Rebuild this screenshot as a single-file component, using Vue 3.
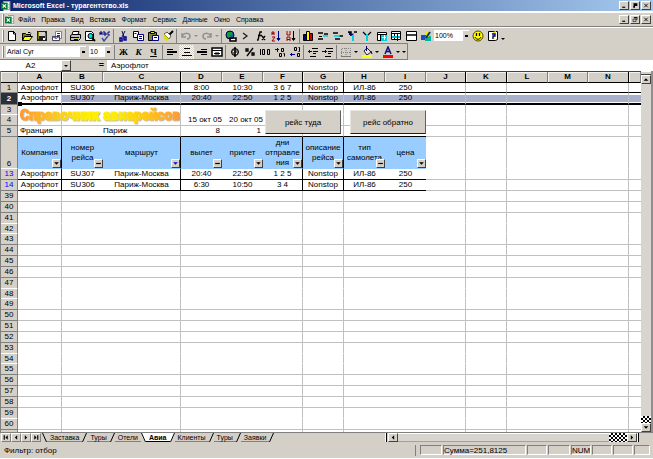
<script setup>
const icons = {
  excel: '<path fill="#fff" d="M3 0h8v12H3z"/><path fill="none" stroke="#808080" d="M3.5.5h7v10h-7"/><path fill="#007a33" d="M0 2h8v8H0z"/><path stroke="#fff" stroke-width="1.5" d="M2 4l4 4M6 4l-4 4"/><path stroke="#84b090" d="M8 4.5h2M8 7.500h2"/>',
  blank: '<path fill="#fff" stroke="#000" d="M2.500 1.500h5l2 2v7h-7z"/><path fill="none" stroke="#000" d="M7.500 1v3h2"/>',
  open: '<path fill="#808000" stroke="#000" d="M1.500 10.500v-7h3l1 1h4v2"/><path fill="#ffff00" stroke="#000" d="M1.500 10.500l2-4h8l-3 4z"/><path fill="none" stroke="#000" d="M7 2.500h2l1 1"/>',
  save: '<path fill="#202020" d="M1 1h10v10H1z"/><path fill="#808000" d="M2 2h1v7H2zM9 3h1v6H9z"/><path fill="#d4d0c8" d="M3 2h6v4H3z"/><path fill="#fff" d="M7 8h2v2H7z"/>',
  mail: '<path fill="#fff" stroke="#808080" d="M4.500 1.500h6v7h-6z"/><path stroke="#335" d="M6 3.500h3M6 5.500h3"/><path fill="#fff" stroke="#446" d="M1.500 6.500h7v4h-7zl3.500 2 3.500-2"/>',
  print: '<path fill="#fff" stroke="#000" d="M4 1.500h6l-1 3H3z"/><path fill="#c0c0c0" stroke="#000" d="M1.500 5.500l2-1h8v4l-2 2h-8z"/><path stroke="#000" d="M2 7.500h8M5 9.500h4"/><path fill="#dd0" d="M7 8h2v1H7z"/>',
  preview: '<path fill="#fff" stroke="#000" d="M1.500 1.500h6l2 2v7h-8z"/><circle cx="6.500" cy="6" r="2.500" fill="#00e0f0" stroke="#000"/><path stroke="#000" stroke-width="2" d="M8 8l3 3"/>',
  spell: '<path fill="none" stroke="#000080" d="M1 5V2h2v3M1 3.500h2M5 1v4h2V3H5M11 2H9v3h2"/><path fill="none" stroke="#4050a0" stroke-width="1.500" d="M3 8l2 3 4-5"/>',
  cut: '<path stroke="#101050" d="M5 1l2 6M8 1L5 7"/><path fill="none" stroke="#000090" stroke-width="1.500" d="M3 8h2v3H3zM7 7h2v3H7z"/>',
  copy: '<path fill="#fff" stroke="#000" d="M1.500 1.500h5v6h-5z"/><path fill="#fff" stroke="#000080" d="M5.500 4.500h6v6h-6z"/><path stroke="#000080" d="M7 6.500h3M7 8.500h3M2.500 3.500h2"/>',
  paste: '<path fill="#808040" stroke="#000" d="M1.500 2.500h8v8h-8z"/><path fill="#ee0" stroke="#000" d="M3.500 1.500h4v2h-4z"/><path fill="#fff" stroke="#000080" d="M5.500 5.500h6v5h-6z"/><path stroke="#000080" d="M7 7.500h3"/>',
  brush: '<path stroke="#000" stroke-width="2" d="M11 1L7 5"/><path fill="#fff" stroke="#555" d="M2 4l3-2 4 4-2 3z"/><path fill="#dd0" d="M2 4l5 5-3 2-2-3z"/>',
  undo: '<path fill="none" stroke="#909090" stroke-width="1.500" d="M2 3v4h4M2 6c3-4 8-3 8 0s-2 3-3 3"/>',
  redo: '<path fill="none" stroke="#909090" stroke-width="1.500" d="M10 3v4H6M10 6C7 2 2 3 2 6s2 3 3 3"/>',
  globe: '<circle cx="5" cy="5" r="4" fill="#1464a0" stroke="#003"/><path fill="#11a030" d="M3 2h4v3H5v2H2V4z"/><path fill="none" stroke="#000" stroke-width="1.500" d="M5 8h6v3H5z"/><path stroke="#fff" d="M6 9.500h4"/>',
  sigma: '<path fill="none" stroke="#222" stroke-width="1.300" d="M3 3l4 3-4 3"/>',
  fx: '<path fill="none" stroke="#000" stroke-width="1.300" d="M7 2H5L3 10H2M3 5.500h4M7 6l3 4M10 6l-3 4"/>',
  sortA: '<path fill="none" stroke="#a00000" d="M2 5V2h2v3M2 3.500h2"/><path fill="none" stroke="#a00000" d="M2 7h3l-3 4h3"/><path stroke="#000090" fill="#000" d="M8.500 1v8M7 8.500h3l-1.500 2z"/>',
  sortZ: '<path fill="none" stroke="#a00000" d="M2 1v4h3V1"/><path fill="none" stroke="#a00000" d="M2 11V7h3v4M2 9.500h3"/><path stroke="#000" fill="#000" d="M8.500 1v8M7 8.500h3l-1.500 2z"/>',
  chart: '<path fill="#000080" stroke="#000" d="M1.500 4.500h3v6h-3z"/><path fill="#ff0" stroke="#000" d="M4.500 1.500h3v9h-3z"/><path fill="#d00000" stroke="#000" d="M7.500 3.500h3v7h-3z"/>',
  rowIn: '<path stroke="#000" stroke-width="1.500" d="M1 3h5M1 9h5M7 4h4"/><path stroke="#00d0e0" stroke-width="1.500" d="M6 6h5"/><path stroke="#000" d="M2 6.500h3"/>',
  rowOut: '<path stroke="#000" stroke-width="1.500" d="M1 3h5M3 9h5M7 6h4"/><path stroke="#00d0e0" stroke-width="1.500" d="M2 6h6"/>',
  colIn: '<path stroke="#000" stroke-width="1.500" d="M2 2h3v4M8 2h3"/><path stroke="#00d0e0" stroke-width="2" d="M7 3v8"/><path stroke="#000090" d="M3 4.500h4"/>',
  colOut: '<path fill="none" stroke="#000" stroke-width="1.300" d="M2 2l3 3M10 2L7 5"/><path stroke="#00d0e0" stroke-width="2" d="M6 4v7"/>',
  gridA: '<path fill="#fff" stroke="#000" d="M1.500 2.500h9v8h-9z"/><path fill="#00d0e0" d="M5 5h6v6H5z"/><path stroke="#000" d="M1 4.500h10M4.500 4v6"/><path stroke="#fff" d="M6 7.500h4M8.500 5v5"/>',
  gridB: '<path fill="#fff" stroke="#000" d="M1.500 1.500h9v8h-9z"/><path stroke="#000" d="M1 3.500h10M4.500 3v7"/><path stroke="#00c0d0" stroke-width="2" d="M2 7h8"/><path stroke="#000080" d="M7.500 4v7"/>',
  pane: '<path fill="#fff" stroke="#000" d="M1.500 1.500h10v9h-10z"/><path stroke="#000" stroke-width="1.500" d="M1 5h10"/>',
  draw: '<path fill="#1450b0" d="M1 5h5v5H1z"/><path fill="#00b0a0" d="M5 6h6v5H5z"/><path fill="#ee0" d="M6 1h3v6H6z"/><path stroke="#003080" stroke-width="2" d="M10 2L6 8"/>',
  smile: '<circle cx="6" cy="6" r="5" fill="#ff0" stroke="#554400"/><path stroke="#000" stroke-width="1.300" d="M4.500 3v3M7.500 3v3"/><path fill="none" stroke="#000" d="M3 7c1 3 5 3 6 0"/>',
  help: '<path fill="#fff" stroke="#000" d="M1.500 1.500h9v8l-2 1h-7z"/><path fill="#ee0" d="M6 2l3-1v3L7 9H5z"/><path fill="none" stroke="#000090" stroke-width="1.300" d="M5 4h3v2H6v3"/>',
  left: '<path stroke="#000" stroke-width="2" d="M1 6h10"/><path stroke="#000" d="M1 3.500h6M1 8.500h6"/>',
  center: '<path stroke="#000" d="M3 2.500h6M3 6.500h6M1 9.500h10"/>',
  right: '<path stroke="#000" stroke-width="2" d="M1 6h10"/><path stroke="#000" d="M5 3.500h6M5 8.500h6"/>',
  merge: '<path fill="#fff" stroke="#000" stroke-width="1.500" d="M1 2h10v8H1z"/><path stroke="#000" d="M1 4.500h10"/><path fill="none" stroke="#000" d="M3 7.500h6M5 6v3M7 6v3"/>',
  money: '<circle cx="6" cy="6" r="3.500" fill="#777" stroke="#000"/><path stroke="#000" stroke-width="1.500" d="M6 1v10"/><path stroke="#fff" d="M4 5.500h1M7 7.500h1"/>',
  percent: '<path fill="none" stroke="#000" stroke-width="1.300" d="M2 3h2v2H2zM8 7h2v2H8zM9 2L3 10"/>',
  zeros: '<path fill="none" stroke="#000" d="M1.500 3v6M3.500 3.500h2v5h-2zM8.500 3.500h2v5h-2z"/>',
  decUp: '<path fill="none" stroke="#000090" d="M1 3.500h4M3.500 2v4"/><path fill="none" stroke="#000" d="M7.500 2.500h2v3h-2zM5.500 7.500h2v3h-2zM9.500 7.500h1v3"/>',
  decDown: '<path fill="none" stroke="#000" d="M5.500 1.500h2v3h-2zM9.500 1.500h1v4h-1M8.500 7.500h2v3h-2z"/><path stroke="#000090" d="M1 8.500h5M2.500 7v3"/>',
  indentL: '<path stroke="#000" d="M5 2.500h6M6 5.500h5M6 7.500h3M3 10.500h6"/><path stroke="#000090" d="M1 5.500h4M2.500 4v3"/>',
  indentR: '<path stroke="#000" d="M4 2.500h7M6 5.500h5M6 7.500h3M3 10.500h6"/><path stroke="#000090" d="M0 5.500h5M3.500 4v3"/>',
  borders: '<path fill="none" stroke="#808080" stroke-dasharray="1 1" d="M1.500 10V2.500h9V10M6 2v8M1 6.500h10"/><path stroke="#777" d="M1 10.500h10"/>',
  fill: '<path fill="#e8e8e8" stroke="#222" d="M3 5l3-3 4 4-4 3z"/><path stroke="#000060" d="M5.500 0v5M10 5l1 3"/><path fill="#ff0" d="M1 9h10v3H1z"/>',
  color: '<path fill="none" stroke="#101080" stroke-width="1.500" d="M3 8l3-7 3 7M4 5.500h4"/><path fill="#f00" d="M1 9h10v3H1z"/>',
  min: '<path fill="#000" d="M3 8h5v2H3z"/>',
  restore: '<path fill="none" stroke="#000" d="M4.500 2.500h5v4h-2M2.500 5.500h5v4h-5z"/><path stroke="#000" stroke-width="2" d="M4 3h6"/>',
  max: '<path fill="#000" d="M3 2h7v5H6v3H3V6h1z"/>',
  close: '<path stroke="#000" stroke-width="1.500" d="M3 3l6 6M9 3L3 9"/>',
  first: '<path fill="#000" d="M2 2h2v8H2zM9 2v8L5 6z"/>',
  prev: '<path fill="#000" d="M8 2v8L4 6z"/>',
  next: '<path fill="#000" d="M4 2v8l4-4z"/>',
  last: '<path fill="#000" d="M8 2h2v8H8zM3 2v8l4-4z"/>',
  up: '<path fill="#000" d="M2 8h8L6 4z"/>',
  down: '<path fill="#000" d="M2 4h8L6 8z"/>',
  dash: '<path fill="#000" d="M2 5h8v2H2z"/>',
  blueDown: '<path fill="#00f" d="M2 4h8L6 8z"/>'
}
const menus = ['Файл', 'Правка', 'Вид', 'Вставка', 'Формат', 'Сервис', 'Данные', 'Окно', 'Справка']
const groups = [
  ['blank', 'open', 'save', 'mail'],
  ['print', 'preview', 'spell'],
  ['cut', 'copy', 'paste', 'brush'],
  ['undo', 'more', 'redo', 'more'],
  ['globe', 'sigma', 'fx', 'sortA', 'sortZ']
]
const tableTools = ['chart', 'rowIn', 'rowOut', 'colIn', 'colOut', 'gridA', 'gridB', 'pane', 'draw']
const formatGroups = [
  ['left', 'center', 'right', 'merge'],
  ['money', 'percent', 'zeros', 'decUp', 'decDown'],
  ['indentL', 'indentR'],
  ['borders', 'more', 'fill', 'more', 'color', 'more', 'more']
]
const cols = 'ABCDEFGHIJKLMNO'.split('')
const strong = 'ACFGJKN'
const flight = (n, kind, cells) => ({ n, kind, cells })
const rows = [
  flight(1, 'first', ['Аэрофлот', 'SU306', 'Москва-Париж', '8:00', '10:30', '3 6 7', 'Nonstop', 'ИЛ-86', '250']),
  flight(2, 'selected', ['Аэрофлот', 'SU307', 'Париж-Москва', '20:40', '22:50', '1 2 5', 'Nonstop', 'ИЛ-86', '250']),
  flight(3, 'short noline', []),
  flight(4, 'dates', ['', '', '', '15 окт 05', '20 окт 05']),
  flight(5, 'place', ['Франция', '', 'Париж', '8', '1']),
  flight(6, 'heads', ['Компания', 'номер рейса', 'маршрут', 'вылет', 'прилет', 'дни отправле ния', 'описание рейса', 'тип самолета', 'цена']),
  flight(13, 'found', ['Аэрофлот', 'SU307', 'Париж-Москва', '20:40', '22:50', '1 2 5', 'Nonstop', 'ИЛ-86', '250']),
  flight(14, 'found', ['Аэрофлот', 'SU306', 'Париж-Москва', '6:30', '10:50', '3 4', 'Nonstop', 'ИЛ-86', '250'])
]
for (let n = 39; n <= 60; n++) {
  const faint = [41, 42, 47, 48, 53, 54, 59].includes(n)
  const low = [42, 48, 54].includes(n)
  rows.push(flight(n, (faint ? 'noline ' : '') + (low ? 'short' : ''), []))
}
rows.push(flight('', '', []))
const filterIcon = i => (i === 2 ? 'blueDown' : [1, 3, 7].includes(i) ? 'dash' : 'down')
const tabs = ['Заставка', 'Туры', 'Отели', 'Авиа', 'Клиенты', 'Туры', 'Заявки']
const panels = ['p20', 'p22', 'p20 num', 'p20', 'p20', 'p15']
</script>

<template>
  <main class="window">
    <header class="title">
      <svg class="ico" viewBox="0 0 12 12" v-html="icons.excel"></svg>
      <h1>Microsoft Excel - турагентство.xls</h1>
      <div class="controls">
        <button v-for="c in ['min', 'max', 'close']" :key="c" class="ctl" :aria-label="c"><svg viewBox="0 0 12 12" v-html="icons[c]"></svg></button>
      </div>
    </header>
    <nav class="menu">
      <i class="grip"></i>
      <svg class="ico" viewBox="0 0 12 12" v-html="icons.excel"></svg>
      <a v-for="m in menus" :key="m" href="#">{{ m }}</a>
      <div class="controls">
        <button v-for="c in ['min', 'restore', 'close']" :key="c" class="ctl" :aria-label="c"><svg viewBox="0 0 12 12" v-html="icons[c]"></svg></button>
      </div>
    </nav>

    <div class="bar">
      <i class="grip"></i>
      <template v-for="(g, gi) in groups" :key="gi">
        <div class="group">
          <button v-for="(b, bi) in g" :key="bi" :class="['tool', { more: b === 'more' }]" :aria-label="b">
            <i v-if="b === 'more'" class="caret" :class="{ off: gi === 3 }"></i>
            <svg v-else viewBox="0 0 12 12" v-html="icons[b]"></svg>
          </button>
        </div>
        <i class="sep"></i>
      </template>
      <div class="group fit">
        <button v-for="b in tableTools" :key="b" class="tool" :aria-label="b"><svg viewBox="0 0 12 12" v-html="icons[b]"></svg></button>
      </div>
      <div class="combo zoom">
        <select aria-label="Масштаб"><option>100%</option></select><i class="caret"></i>
      </div>
      <button class="tool" aria-label="smile"><svg viewBox="0 0 12 12" v-html="icons.smile"></svg></button>
      <button class="tool" aria-label="help"><svg viewBox="0 0 12 12" v-html="icons.help"></svg></button>
      <button class="tool more low" aria-label="more"><i class="caret"></i></button>
    </div>

    <div class="bar format">
      <i class="grip"></i>
      <div class="combo font"><select aria-label="Шрифт"><option>Arial Cyr</option></select><i class="caret"></i></div>
      <div class="combo size"><select aria-label="Размер"><option>10</option></select><i class="caret"></i></div>
      <i class="sep"></i>
      <div class="group">
        <button class="tool letter">Ж</button>
        <button class="tool letter italic">К</button>
        <button class="tool letter under">Ч</button>
      </div>
      <template v-for="(g, gi) in formatGroups" :key="gi">
        <i class="sep"></i>
        <div class="group">
          <button v-for="(b, bi) in g" :key="bi" :class="['tool', { more: b === 'more', pressed: b === 'center' }]" :aria-label="b">
            <i v-if="b === 'more'" class="caret"></i>
            <svg v-else viewBox="0 0 12 12" v-html="icons[b]"></svg>
          </button>
        </div>
      </template>
    </div>

    <div class="formula">
      <input class="name" aria-label="Имя" value="A2">
      <button class="drop" aria-label="Имена"><i class="caret"></i></button>
      <span class="equals">=</span>
      <input class="value" aria-label="Формула" value="Аэрофлот">
    </div>

    <section class="book">
      <div class="sheet">
        <table>
          <colgroup>
            <col class="w17">
            <col class="w44"><col class="w41"><col class="w78"><col class="w41"><col class="w41"><col class="w40">
            <col class="w41"><col class="w41"><col class="w41"><col class="w40"><col class="w41"><col class="w41">
            <col class="w40"><col class="w41"><col>
          </colgroup>
          <thead>
            <tr>
              <th></th>
              <th v-for="c in cols" :key="c" :class="{ strong: strong.includes(c) }">{{ c === 'O' ? '' : c }}</th>
            </tr>
          </thead>
          <tbody>
            <tr v-for="r in rows" :key="r.n" :class="r.kind">
              <th>{{ r.n }}</th>
              <td v-for="(c, i) in cols" :key="c" :class="{ strong: strong.includes(c), used: i < 9, active: r.n === 2 && i === 0 }">
                <span class="txt">{{ r.cells[i] }}</span>
                <button v-if="r.n === 6 && i < 9" class="filter" :aria-label="'Фильтр ' + c"><svg viewBox="0 0 12 12" v-html="icons[filterIcon(i)]"></svg></button>
              </td>
            </tr>
          </tbody>
        </table>
        <i class="handle"></i>
        <div class="wordart">Справочник авиарейсов</div>
        <button class="macro there">рейс туда</button>
        <button class="macro back">рейс обратно</button>
      </div>
      <div class="vscroll">
        <i class="split"></i>
        <button class="sb" aria-label="Вверх"><svg viewBox="0 0 12 12" v-html="icons.up"></svg></button>
        <i class="grow"></i>
        <i class="check"></i>
        <button class="sb" aria-label="Вниз"><svg viewBox="0 0 12 12" v-html="icons.down"></svg></button>
      </div>
    </section>

    <div class="tabs">
      <div class="navs">
        <button v-for="n in ['first', 'prev', 'next', 'last']" :key="n" class="nav" :aria-label="n"><svg viewBox="0 0 12 12" v-html="icons[n]"></svg></button>
      </div>
      <svg class="slash" viewBox="0 0 5 9"><path d="M0.500 0L4.500 9" /></svg>
      <template v-for="(t, i) in tabs" :key="i">
        <button :class="['tab', { on: i === 3 }]">{{ t }}</button>
        <svg class="slash" viewBox="0 0 5 9">
          <polygon v-if="i === 2" points="0,0 5,0 5,9 4,9" />
          <polygon v-if="i === 3" points="0,0 5,0 1,9 0,9" />
          <path :d="i === 2 ? 'M0.500 0L4.500 9' : 'M4.500 0L0.500 9'" />
        </svg>
      </template>
      <div class="hscroll">
        <i class="bar-split"></i>
        <button class="sb" aria-label="Влево"><svg viewBox="0 0 12 12" v-html="icons.prev"></svg></button>
        <i class="grow"></i>
        <i class="check"></i>
        <button class="sb" aria-label="Вправо"><svg viewBox="0 0 12 12" v-html="icons.next"></svg></button>
        <i class="bar-split"></i>
      </div>
    </div>

    <footer class="status">
      <span class="mode">Фильтр: отбор</span>
      <i class="sep"></i>
      <span class="panel p22"></span>
      <span class="panel sum">Сумма=251,8125</span>
      <span v-for="(p, i) in panels" :key="i" :class="['panel', p]">{{ i === 2 ? 'NUM' : '' }}</span>
    </footer>
  </main>
</template>

<style>
body { background: #d4d0c8; overflow: hidden; }
</style>

<style scoped>
.window { height: 100vh; display: flex; flex-direction: column; background: #d4d0c8; color: #000; font: 7px/9px "Liberation Sans", Arial, sans-serif; }
* { box-sizing: border-box; }
button, input, select { font: inherit; color: inherit; margin: 0; padding: 0; border: 0; border-radius: 0; background: none; appearance: none; outline: none; }
i { display: block; flex: none; }
svg { display: block; flex: none; }
.title { flex: none; height: 11px; display: flex; align-items: center; gap: 2px; padding: 0 2px 0 1px; background: linear-gradient(90deg, #0a246a, #a6caf0); color: #fff; }
.title h1 { margin: 0; font-size: 7px; line-height: 9px; }
.ico { width: 10px; height: 10px; }
.controls { margin-left: auto; display: flex; gap: 1px; }
.ctl { width: 10px; height: 9px; background: #d4d0c8; border: 1px solid; border-color: #fff #404040 #404040 #fff; }
.ctl svg { width: 8px; height: 7px; }
.menu { flex: none; height: 16px; display: flex; align-items: center; gap: 6px; padding: 0 2px 0 2px; border-top: 2px solid #fff; border-bottom: 1px solid #808080; }
.menu .ico { margin: 0 -3px 0 -5px; }
.menu a { color: #000; text-decoration: none; }
.grip { width: 2px; height: 12px; border-left: 1px solid #fff; border-right: 1px solid #808080; }
.bar { flex: none; height: 16px; display: flex; align-items: center; padding-left: 2px; border-top: 1px solid #fff; }
.format { align-self: flex-start; height: 17px; border-top-color: #808080; border-right: 1px solid #808080; border-bottom: 1px solid #808080; }
.group { display: flex; align-items: center; }
.fit { width: 132px; }
.fit .tool { flex: 1; }
.tool { width: 15px; height: 14px; display: flex; align-items: center; justify-content: center; }
.tool svg { width: 12px; height: 12px; }
.more { width: 6px; }
.low { padding-top: 6px; }
.pressed { background: repeating-conic-gradient(#fff 0 25%, #d4d0c8 0 50%) 0 0 / 2px 2px; }
.sep { width: 1px; height: 14px; margin: 0 1px; background: #808080; }
.caret { width: 0; height: 0; border: 2px solid transparent; border-top-color: #000; border-bottom: 0; }
.caret.off { border-top-color: #909090; }
.letter { font: 700 9px/12px "Liberation Serif", serif; }
.italic { font-style: italic; }
.under { text-decoration: underline; }
.combo { display: flex; align-items: center; height: 11px; background: #fff; }
.combo select { flex: 1; min-width: 0; height: 11px; padding-left: 1px; }
.combo .caret { width: 6px; height: 10px; border: 0; background: linear-gradient(#000, #000) center / 3px 2px no-repeat #d4d0c8; }
.font { width: 80px; margin: 0 3px 0 2px; }
.size { width: 22px; margin-right: 2px; }
.zoom { width: 35px; margin: 0 1px 0 1px; }
.formula { flex: none; height: 11px; display: flex; background: #d4d0c8; }
.formula input { height: 11px; background: #fff; font-size: 8px; line-height: 11px; }
.name { width: 61px; text-align: center; }
.drop { width: 10px; display: flex; align-items: center; justify-content: center; border: 1px solid; border-color: #fff #404040 #404040 #fff; }
.equals { width: 36px; padding-right: 3px; text-align: right; font: 700 9px/11px "Liberation Sans", sans-serif; }
.value { flex: 1; min-width: 0; padding-left: 4px; }
.book { flex: 1; min-height: 0; display: flex; padding-left: 1px; background: #808080; }
.sheet { position: relative; flex: 1; min-width: 0; overflow: hidden; background: #fff; border-top: 1px solid #404840; }
table { width: 100%; table-layout: fixed; border-collapse: separate; border-spacing: 0; }
.w17 { width: 17px; }
.w40 { width: 40px; }
.w41 { width: 41px; }
.w44 { width: 44px; }
.w78 { width: 78px; }
th, td { height: 11px; padding: 0; font-size: 8px; line-height: 8px; text-align: center; white-space: nowrap; }
thead th { border-right: 1px solid #808080; border-bottom: 1px solid #000; background: #d4d0c8; box-shadow: inset 1px 1px #f4f2ee; }
thead .strong { border-right-color: #000; }
tbody th { font-weight: 400; background: #d4d0c8; border-right: 1px solid #808080; border-bottom: 1px solid #808080; }
td { position: relative; border-bottom: 1px solid #c0c0c0; }
td.strong { border-right: 1px solid #c0c0c0; }
.short th, .short td, .first th, .first td { height: 10px; }
.noline th { border-bottom-color: #fff; }
.noline td { border-bottom-color: transparent; }
.first td { border-bottom-color: #000; }
.first .used.strong, .found .used.strong, .heads .used.strong { border-right-color: #000; }
.selected th { height: 12px; background: #2a3038; color: #fff; font-weight: 700; }
.selected td { height: 12px; border-bottom: 2px solid #000; background: linear-gradient(#fff 2px, #a8b0cc 2px, #a8b0cc 9px, #fff 9px); }
.selected td.active { background: #fff; }
.dates td { text-align: right; }
.place td { text-align: right; border-bottom-color: #c0c0c0; }
.place td:nth-child(2) { text-align: left; padding-left: 2px; }
.place td:nth-child(4) { text-align: left; }
.place td.used { border-bottom-color: #000; }
.place td:nth-child(5), .place td:nth-child(6) { padding-right: 2px; }
.heads th { height: 32px; vertical-align: bottom; border-bottom-color: #fff; }
.heads td { height: 32px; line-height: 10px; white-space: normal; border-bottom-color: transparent; }
.heads td.used { background: #99ccff; }
.heads .txt { display: block; max-height: 31px; overflow: hidden; }
.found th { color: #00f; }
.found td.used { border-bottom-color: #000; }
.filter { position: absolute; right: 0; bottom: 0; width: 9px; height: 9px; background: #d4d0c8; border: 1px solid; border-color: #fff #404040 #404040 #fff; }
.filter svg { width: 7px; height: 7px; }
.handle { position: absolute; left: 17px; top: 30px; width: 4px; height: 4px; background: #000; }
.wordart { position: absolute; left: 19px; top: 33px; font: 900 14px/20px Roboto, "Open Sans", sans-serif; white-space: nowrap; color: transparent; -webkit-text-stroke: 1px transparent; background: linear-gradient(90deg, #ff9933, #ffee00 40%, #ffee00 60%, #ff9933); background-clip: text; filter: drop-shadow(1px 1px 0 #c0c0c0); }
.macro { position: absolute; width: 76px; height: 24px; background: #d4d0c8; border: 1px solid; border-color: #e8e6e0 #606060 #202020 #e8e6e0; font-size: 8px; text-align: center; }
.there { left: 264px; top: 38px; }
.back { left: 349px; top: 38px; }
.vscroll { width: 12px; display: flex; flex-direction: column; background: #d4d0c8; border-right: 2px solid #909090; }
.split { height: 4px; border-top: 1px solid #fff; border-bottom: 1px solid #404040; }
.sb { flex: none; width: 10px; height: 9px; background: #d4d0c8; border: 1px solid; border-color: #fff #404040 #404040 #fff; }
.sb svg { width: 8px; height: 7px; }
.grow { flex: 1; background: #d8d5ce; }
.check { background: repeating-conic-gradient(#000 0 25%, #fff 0 50%) 0 0 / 4px 4px; }
.vscroll .check { height: 7px; }
.tabs { flex: none; height: 10px; display: flex; border-top: 1px solid #808080; }
.navs { display: flex; padding: 0 1px; }
.nav { width: 10px; height: 9px; border: 1px solid; border-color: #fff #808080 #808080 #fff; }
.nav svg { width: 8px; height: 7px; }
.tab { padding: 0 3px; height: 9px; line-height: 9px; border-bottom: 1px solid #808080; }
.tab.on { background: #fff; font-weight: 700; border-bottom-color: #000; }
.slash { width: 5px; height: 9px; }
.slash path { fill: none; stroke: #000; }
.slash polygon { fill: #fff; }
.hscroll { display: flex; width: 39%; margin: 0 13px 0 auto; }
.hscroll .grow { border-top: 1px solid #fff; border-bottom: 1px solid #a0a0a0; }
.hscroll .check { width: 18px; }
.bar-split { width: 2px; margin-right: 1px; border-left: 1px solid #fff; border-right: 1px solid #000; }
.status { flex: none; height: 17px; display: flex; align-items: center; gap: 1px; padding: 0 3px 0 4px; border-bottom: 1px solid #fff; font-size: 8px; }
.mode { flex: 1; }
.status .sep { height: 11px; margin: 0 3px 0 0; }
.panel { height: 10px; line-height: 9px; border: 1px solid; border-color: #808080 #fff #fff #808080; white-space: nowrap; }
.p22 { width: 22px; }
.sum { width: 83px; }
.p20 { width: 20px; }
.p15 { width: 16px; }
.num { text-align: center; }
</style>
